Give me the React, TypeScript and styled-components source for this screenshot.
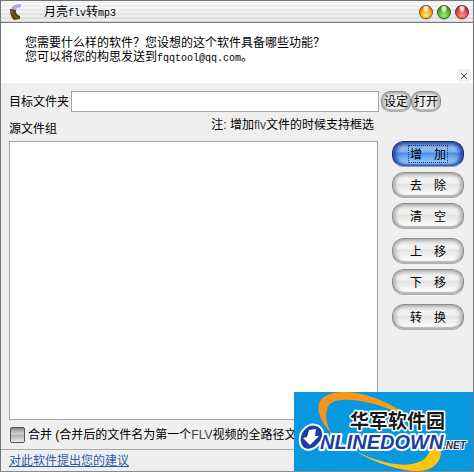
import React from 'react';
import styled, { createGlobalStyle, css } from 'styled-components';

const GlobalStyle = createGlobalStyle`
  * { box-sizing: border-box; }
  body { margin: 0; background: #efefef; color: #000; font: 12px/14px "Liberation Sans", "Noto Sans CJK SC", sans-serif; }
  button, input { font: inherit; color: inherit; }
`;

const Window = styled.div`
  position: relative;
  display: flex;
  flex-direction: column;
  min-height: 100vh;
  border: 1px solid #77767b;
  border-bottom-color: #8a8a8a;
  background: #efefef;
  overflow: hidden;
`;

const TitleBar = styled.header`
  display: flex;
  align-items: center;
  height: 22px;
  padding: 0 4px 0 7px;
  border-bottom: 1px solid #77767b;
  background: repeating-linear-gradient(#fff0 0 2px, #ffffff80 2px 4px), linear-gradient(#f4f4f4, #d8d8d8);
`;

const Title = styled.h1`
  flex: 1;
  margin: 0 0 0 20px;
  padding-top: 2px;
  font-size: 12px;
  line-height: 20px;
  font-weight: 400;
`;

const Mono = styled.span`
  font-family: "Liberation Mono", monospace;
  font-size: 10px;
`;

const Lights = styled.div`
  display: flex;
  gap: 4px;
`;

const Light = styled.button<{ $edge: string; $mid: string; $glow: string }>`
  width: 14px;
  height: 14px;
  padding: 0;
  border: 1px solid ${p => p.$edge};
  border-radius: 50%;
  background:
    radial-gradient(ellipse at 50% 15%, #fffd 0 15%, #fff0 40%),
    radial-gradient(circle at 50% 80%, ${p => p.$glow}, ${p => p.$mid} 60%, ${p => p.$edge});
  box-shadow: 0 1px 1px #9999;
`;

const Banner = styled.section`
  display: flex;
  justify-content: space-between;
  height: 60px;
  padding: 13px 2px 0 24px;
  background: #fff;
`;

const BannerText = styled.p`
  margin: 0;
`;

const CloseButton = styled.button`
  align-self: flex-end;
  display: grid;
  place-items: center;
  width: 14px;
  height: 13px;
  margin-bottom: 1px;
  padding: 0;
  border: 0;
  border-radius: 2px;
  background: #eeefee;
`;

const Main = styled.main`
  flex: 1;
  display: flex;
  flex-direction: column;
  padding: 8px 9px 0 8px;
`;

const TargetRow = styled.div`
  display: flex;
  align-items: center;
`;

const TargetLabel = styled.label`
  width: 62px;
`;

const TextInput = styled.input`
  flex: 1;
  min-width: 0;
  height: 21px;
  margin-right: 2px;
  padding: 2px;
  border: 1px solid #a3a3a3;
  border-radius: 0;
  background: #fff;
  outline: 0;
`;

const TargetActions = styled.div`
  display: flex;
  width: 83px;
`;

const Body = styled.div`
  flex: 1;
  display: flex;
  gap: 14px;
`;

const Group = styled.section`
  flex: 1;
  min-width: 0;
  display: flex;
  flex-direction: column;
`;

const GroupHead = styled.div`
  display: flex;
  justify-content: space-between;
  height: 29px;
  padding: 6px 4px 0 0;
`;

const GroupTitle = styled.h2`
  margin: 4px 0 0;
  font-size: 12px;
  line-height: 14px;
  font-weight: 400;
`;

const Latin = styled.span`
  color: #444;
`;

const FileList = styled.div`
  flex: 1;
  border: 1px solid #a3a3a3;
  background: #fff;
`;

const Actions = styled.div`
  display: flex;
  flex-direction: column;
  gap: 5px;
  width: 72px;
  padding-top: 29px;
`;

const ActionSet = styled.div`
  display: flex;
  flex-direction: column;
  gap: 5px;
  margin-bottom: 4px;
`;

const Pill = styled.button<{ $small?: boolean; $active?: boolean }>`
  display: flex;
  align-items: center;
  justify-content: center;
  width: ${p => (p.$small ? 30 : 72)}px;
  height: ${p => (p.$small ? 21 : 26)}px;
  padding: 0;
  white-space: nowrap;
  outline: 0;
  border: 1px solid #8c8c8c;
  border-bottom-color: #b0b0b0;
  border-radius: ${p => (p.$small ? 9 : 12)}px;
  background: linear-gradient(#c4c4c4, #f3f3f3 25%, #f0f0f0 42%, #e2e2e2 46%, #fcfcfc 90%);
  box-shadow: inset 3px 0 3px #9999, inset -3px 0 3px #9999, inset 0 -2px 1px #c4c4c4;
  ${p => p.$active && css`
    border-color: #1a2c74;
    border-bottom-color: #7d93c0;
    background: linear-gradient(#5878c4, #94b9ee 25%, #7fb0ee 42%, #4a8be0 46%, #9ed3ff 90%);
    box-shadow: inset 3px 0 4px #1846a8, inset -3px 0 4px #1846a8, inset 0 -2px 1px #7d9fce;
  `}
`;

const Focus = styled.span<{ $on?: boolean }>`
  display: flex;
  gap: 12px;
  padding: 2px 1px 0;
  border: 1px dotted ${p => (p.$on ? '#263c66' : 'transparent')};
`;

const MergeRow = styled.label`
  display: flex;
  align-items: center;
  gap: 3px;
  height: 29px;
  padding-left: 1px;
  white-space: nowrap;
`;

const CheckBox = styled.input`
  appearance: none;
  flex: none;
  width: 15px;
  height: 16px;
  margin: 0;
  border: 1px solid #555;
  border-radius: 2px;
  background: linear-gradient(#888, #d8d8d8 45%, #aaa 50%, #eee);
`;

const Footer = styled.footer`
  height: 22px;
  padding: 4px 8px 0;
  border-top: 1px solid #aaa;
`;

const Link = styled.a`
  color: #2a5caa;
`;

const Watermark = styled.svg`
  position: absolute;
  right: -1px;
  bottom: -1px;
  width: 180px;
  height: 80px;
`;

function Horn() {
  return (
    <svg width="16" height="18" viewBox="0 0 16 18" aria-hidden="true">
      <path d="M3 5 Q6 1 13 1 L13 4 L9 5 L8 8 L3 7Z" fill="#a9a8ea" />
      <path d="M2 6 L8 7 Q7 11 12 13 L12 16 L6 17 Q2 14 2 6Z" fill="#5b4319" />
      <path d="M4 8 Q4 12 10 15" fill="none" stroke="#a28a50" strokeDasharray="2 1" />
    </svg>
  );
}

function Logo() {
  return (
    <Watermark viewBox="0 0 180 80" role="img" aria-label="华军软件园 ONLINEDOWN.NET">
      <defs>
        <linearGradient id="swoosh" x1="0" y1="0" x2="1" y2="0">
          <stop offset="0" stopColor="#f8931d" />
          <stop offset="1" stopColor="#ff9c10" />
        </linearGradient>
      </defs>
      <rect width="180" height="80" fill="#0798e0" />
      <path d="M36 40 Q44 50 60 59" fill="none" stroke="#c9d992" />
      <path d="M37 41 C24 27 20 12 30 5 C44 -5 78 0 109 20 L103 20 C78 9 47 4 37 11 C30 17 31 29 37 41Z" fill="url(#swoosh)" />
      <path d="M58 57 C75 67 101 75 118 72 Q134 69 136 57 L147 57 C148 71 138 80 119 79 C99 77 76 69 58 57Z" fill="#ffc60f" />
      <g fontFamily='"Noto Sans CJK SC", sans-serif' fontWeight="700" fontSize="19">
        <text x="56" y="36" fill="#17171a" stroke="#fff" strokeWidth="3" strokeLinejoin="round" paintOrder="stroke">华军软件园</text>
      </g>
      <g fontFamily='"Liberation Sans", sans-serif' fontWeight="700" fontStyle="italic" stroke="#fff" strokeLinejoin="round" paintOrder="stroke">
        <text x="26" y="57" fontSize="20" fill="#1a3da6" strokeWidth="4">NLINEDOWN</text>
        <text x="149" y="57" fontSize="10" fill="#20304c" strokeWidth="2">.NET</text>
      </g>
      <path d="M22 33 C29 35 31 42 27 49 C22 57 14 60 9 56 C4 51 5 42 10 37 Q16 31 22 33Z" fill="#1a3da6" stroke="#fff" strokeWidth="2" />
      <path d="M15 38 L22 37 L21 44 L25 44 L16 53 L9 46 L13 45Z" fill="#fff" />
    </Watermark>
  );
}

function Action({ text, active }: { text: string; active?: boolean }) {
  return (
    <Pill type="button" $active={active} aria-label={text}>
      <Focus $on={active}>{[...text].map(c => <span key={c}>{c}</span>)}</Focus>
    </Pill>
  );
}

export default function App() {
  return (
    <>
      <GlobalStyle />
      <Window>
        <TitleBar>
          <Horn />
          <Title>月亮<Mono>flv</Mono>转<Mono>mp3</Mono></Title>
          <Lights>
            <Light type="button" aria-label="最小化" $edge="#87500c" $mid="#f09a12" $glow="#ffec60" />
            <Light type="button" aria-label="最大化" $edge="#28601c" $mid="#45a822" $glow="#a8f070" />
            <Light type="button" aria-label="关闭" $edge="#7c2020" $mid="#d43d3d" $glow="#ff9a90" />
          </Lights>
        </TitleBar>
        <Banner>
          <BannerText>
            您需要什么样的软件？您设想的这个软件具备哪些功能？<br />
            您可以将您的构思发送到<Mono>fqqtool@qq.com</Mono>。
          </BannerText>
          <CloseButton type="button" aria-label="关闭提示">
            <svg width="6" height="6" viewBox="0 0 6 6"><path d="M0 0 L6 6 M6 0 L0 6" stroke="#444" /></svg>
          </CloseButton>
        </Banner>
        <Main>
          <TargetRow>
            <TargetLabel htmlFor="target">目标文件夹</TargetLabel>
            <TextInput id="target" type="text" />
            <TargetActions>
              <Pill type="button" $small>设定</Pill>
              <Pill type="button" $small>打开</Pill>
            </TargetActions>
          </TargetRow>
          <Body>
            <Group>
              <GroupHead>
                <GroupTitle>源文件组</GroupTitle>
                <span>注: 增加<Latin>flv</Latin>文件的时候支持框选</span>
              </GroupHead>
              <FileList />
            </Group>
            <Actions>
              <ActionSet>
                <Action text="增加" active />
                <Action text="去除" />
                <Action text="清空" />
              </ActionSet>
              <ActionSet>
                <Action text="上移" />
                <Action text="下移" />
              </ActionSet>
              <Action text="转换" />
            </Actions>
          </Body>
          <MergeRow>
            <CheckBox type="checkbox" />
            <span>合并 (合并后的文件名为第一个<Latin>FLV</Latin>视频的全路径文件名)</span>
          </MergeRow>
        </Main>
        <Footer><Link href="#feedback">对此软件提出您的建议</Link></Footer>
        <Logo />
      </Window>
    </>
  );
}
